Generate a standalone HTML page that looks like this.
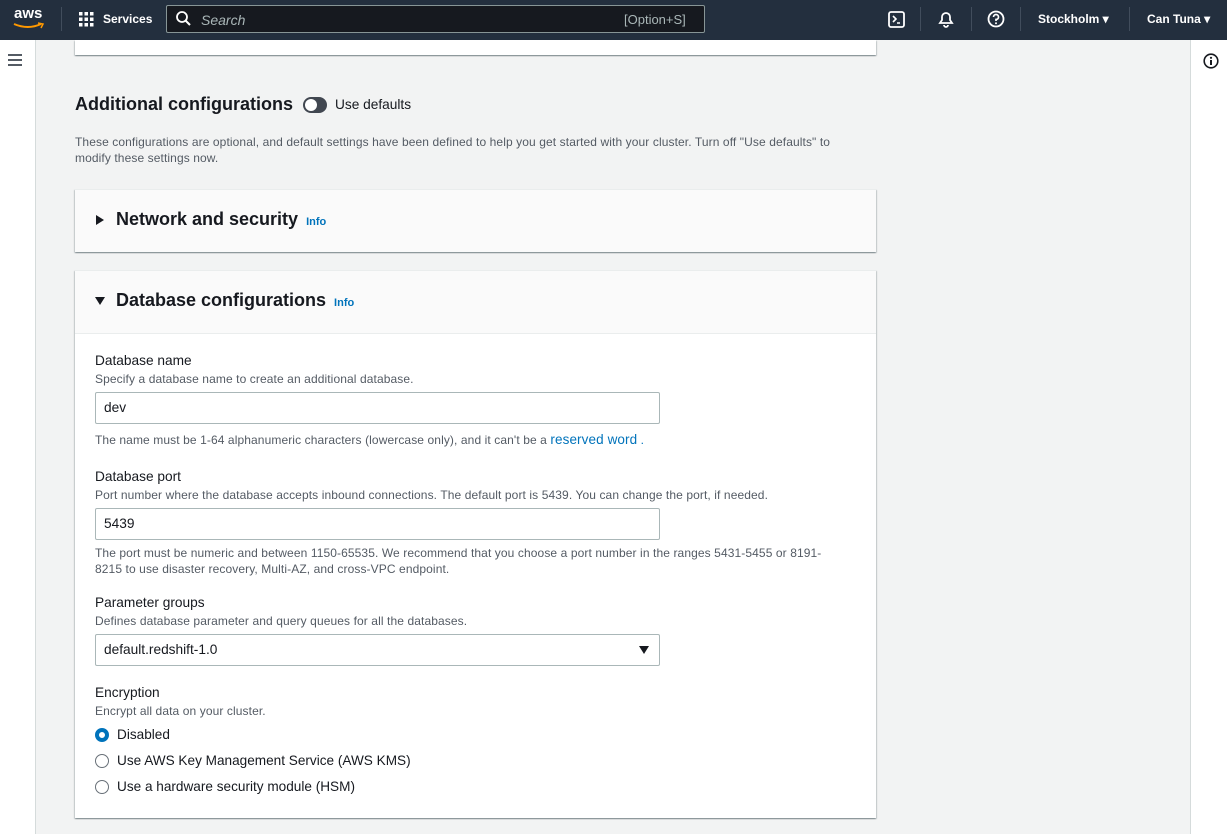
<!DOCTYPE html>
<html><head><meta charset="utf-8"><style>
*{box-sizing:border-box;margin:0;padding:0}
body{width:1227px;height:834px;overflow:hidden;background:#f2f3f3;font-family:"Liberation Sans",sans-serif;color:#16191f;position:relative}
.top{position:absolute;left:0;top:0;width:1227px;height:40px;background:#232f3e;color:#fff;z-index:5}
.abs{position:absolute}
.leftnav{position:absolute;left:0;top:40px;width:36px;height:794px;background:#fff;border-right:1px solid #d5dbdb}
.rightnav{position:absolute;left:1190px;top:40px;width:37px;height:794px;background:#fff;border-left:1px solid #d5dbdb}
.card{position:absolute;left:75px;width:801px;box-shadow:0 1px 1px 0 rgba(0,28,36,.3),1px 1px 1px 0 rgba(0,28,36,.15),-1px 1px 1px 0 rgba(0,28,36,.15);border-top:1px solid #eaeded}
.lbl{font-size:13.7px;color:#16191f;position:absolute;left:95px}
.desc{font-size:12px;letter-spacing:0.1px;color:#545b64;position:absolute;left:95px}
.inp{position:absolute;left:95px;width:565px;height:32px;border:1px solid #aab7b8;background:#fff;border-radius:2px;font-size:13.7px;padding:7px 8px}
.radio{position:absolute;left:95px;width:14px;height:14px;border-radius:50%;border:1px solid #687078;background:#fff}
.rt{position:absolute;left:117px;font-size:13.6px}
.sep{position:absolute;top:7px;width:1px;height:24px;background:#414d5c}
.info{font-size:11px;color:#0073bb;margin-left:8px}
</style></head><body>
<div class="top">
  <div class="abs" style="left:14px;top:5px;font-size:15px;font-weight:bold">aws</div>
  <svg class="abs" style="left:13px;top:22px" width="32" height="8"><path d="M1 2 Q15 8 28 2" stroke="#ff9900" stroke-width="2" fill="none"/><path d="M25 1 L30 2 L28 6" stroke="#ff9900" stroke-width="1.5" fill="none"/></svg>
  <div class="sep" style="left:61px"></div>
  <svg class="abs" style="left:79px;top:12px" width="15" height="15" fill="#fff"><rect x="0" y="0" width="3.5" height="3.5"/><rect x="5.5" y="0" width="3.5" height="3.5"/><rect x="11" y="0" width="3.5" height="3.5"/><rect x="0" y="5.5" width="3.5" height="3.5"/><rect x="5.5" y="5.5" width="3.5" height="3.5"/><rect x="11" y="5.5" width="3.5" height="3.5"/><rect x="0" y="11" width="3.5" height="3.5"/><rect x="5.5" y="11" width="3.5" height="3.5"/><rect x="11" y="11" width="3.5" height="3.5"/></svg>
  <div class="abs" style="left:103px;top:12px;font-size:12px;font-weight:bold">Services</div>
  <div class="abs" style="left:166px;top:5px;width:539px;height:28px;background:#16191f;border:1px solid #879596;border-radius:2px"></div>
  <svg class="abs" style="left:176px;top:11px" width="15" height="16"><circle cx="6" cy="6" r="5" stroke="#fff" stroke-width="1.8" fill="none"/><path d="M9.5 9.5 L14 14" stroke="#fff" stroke-width="2"/></svg>
  <div class="abs" style="left:201px;top:12px;font-size:14px;font-style:italic;color:#aab7b8">Search</div>
  <div class="abs" style="left:624px;top:12px;font-size:13px;color:#aab7b8">[Option+S]</div>
  <svg class="abs" style="left:888px;top:11px" width="17" height="17"><rect x="1" y="1" width="15" height="15" rx="2" stroke="#fff" stroke-width="1.8" fill="none"/><path d="M5 5 L8 8 L5 11 M9 12 H12" stroke="#fff" stroke-width="1.6" fill="none"/></svg>
  <div class="sep" style="left:920px"></div>
  <svg class="abs" style="left:937px;top:10px" width="18" height="18"><path d="M3 13 H15 L13 10 V7 A4 4 0 0 0 5 7 V10 Z" stroke="#fff" stroke-width="1.8" fill="none"/><path d="M7 15 A2 2 0 0 0 11 15" stroke="#fff" stroke-width="1.8" fill="none"/></svg>
  <div class="sep" style="left:971px"></div>
  <svg class="abs" style="left:987px;top:10px" width="18" height="18"><circle cx="9" cy="9" r="7.5" stroke="#fff" stroke-width="1.8" fill="none"/><path d="M6.5 7 A2.5 2.5 0 1 1 9 9.5 V11" stroke="#fff" stroke-width="1.7" fill="none"/><circle cx="9" cy="13.3" r="1" fill="#fff"/></svg>
  <div class="sep" style="left:1020px"></div>
  <div class="abs" style="left:1038px;top:12px;font-size:12px;font-weight:bold">Stockholm ▾</div>
  <div class="sep" style="left:1129px"></div>
  <div class="abs" style="left:1147px;top:12px;font-size:12px;font-weight:bold">Can Tuna ▾</div>
</div>
<div class="leftnav"><svg class="abs" style="left:8px;top:14px" width="14" height="12"><path d="M0 1H14M0 6H14M0 11H14" stroke="#545b64" stroke-width="2"/></svg></div>
<div class="rightnav"><svg class="abs" style="left:12px;top:13px" width="16" height="16"><circle cx="8" cy="8" r="6.8" stroke="#16191f" stroke-width="1.6" fill="none"/><path d="M8 7V12" stroke="#16191f" stroke-width="2"/><circle cx="8" cy="4.8" r="1.1" fill="#16191f"/></svg></div>

<div class="card" style="top:40px;height:15px;background:#fff;border-top:none"></div>

<div class="abs" style="left:75px;top:94px;font-size:18px;font-weight:bold">Additional configurations</div>
<div class="abs" style="left:303px;top:97px;width:24px;height:16px;border-radius:8px;background:#414750"><div style="position:absolute;left:2px;top:2px;width:12px;height:12px;border-radius:50%;background:#fff"></div></div>
<div class="abs" style="left:335px;top:97px;font-size:13.7px">Use defaults</div>
<div class="abs" style="left:75px;top:134px;width:780px;font-size:12px;letter-spacing:0.1px;line-height:16px;color:#545b64">These configurations are optional, and default settings have been defined to help you get started with your cluster. Turn off "Use defaults" to modify these settings now.</div>

<div class="card" style="top:189px;height:63px;background:#fafafa">
  <svg class="abs" style="left:21px;top:25px" width="8" height="10"><path d="M0 0 L8 5 L0 10Z" fill="#16191f"/></svg>
  <div class="abs" style="left:41px;top:19px;font-size:18px;font-weight:bold">Network and security<span class="info">Info</span></div>
</div>

<div class="card" style="top:270px;height:548px;background:#fff">
  <div style="height:63px;background:#fafafa;border-bottom:1px solid #eaeded"></div>
  <svg class="abs" style="left:20px;top:26px" width="10" height="8"><path d="M0 0 L10 0 L5 8Z" fill="#16191f"/></svg>
  <div class="abs" style="left:41px;top:19px;font-size:18px;font-weight:bold">Database configurations<span class="info">Info</span></div>
</div>

<div class="lbl" style="top:353px">Database name</div>
<div class="desc" style="top:372px">Specify a database name to create an additional database.</div>
<div class="inp" style="top:392px">dev</div>
<div class="desc" style="top:432px">The name must be 1-64 alphanumeric characters (lowercase only), and it can't be a <span style="color:#0073bb;font-size:13.5px">reserved word</span> <span style="color:#0073bb">.</span></div>

<div class="lbl" style="top:469px">Database port</div>
<div class="desc" style="top:488px">Port number where the database accepts inbound connections. The default port is 5439. You can change the port, if needed.</div>
<div class="inp" style="top:508px">5439</div>
<div class="desc" style="top:545px;width:750px;line-height:16px">The port must be numeric and between 1150-65535. We recommend that you choose a port number in the ranges 5431-5455 or 8191-8215 to use disaster recovery, Multi-AZ, and cross-VPC endpoint.</div>

<div class="lbl" style="top:595px">Parameter groups</div>
<div class="desc" style="top:614px">Defines database parameter and query queues for all the databases.</div>
<div class="inp" style="top:634px">default.redshift-1.0<svg style="position:absolute;right:10px;top:11px" width="10" height="8"><path d="M0 0 L10 0 L5 8Z" fill="#16191f"/></svg></div>

<div class="lbl" style="top:685px">Encryption</div>
<div class="desc" style="top:704px">Encrypt all data on your cluster.</div>
<div class="radio" style="top:728px;border:4px solid #0073bb"></div><div class="rt" style="top:727px">Disabled</div>
<div class="radio" style="top:754px"></div><div class="rt" style="top:753px">Use AWS Key Management Service (AWS KMS)</div>
<div class="radio" style="top:780px"></div><div class="rt" style="top:779px">Use a hardware security module (HSM)</div>
</body></html>
